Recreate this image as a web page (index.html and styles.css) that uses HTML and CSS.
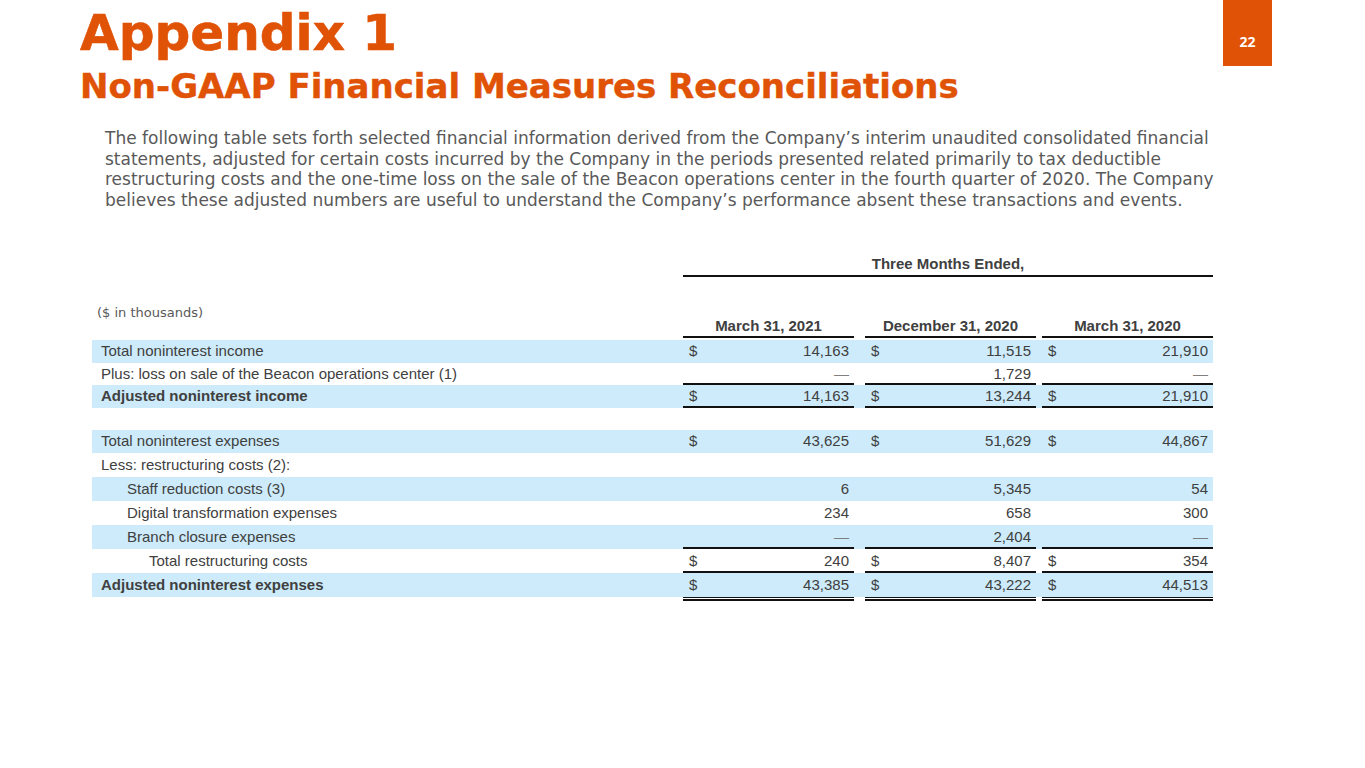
FILE: index.html
```html
<!DOCTYPE html>
<html lang="en">
<head>
<meta charset="utf-8">
<title>Appendix 1</title>
<link rel="stylesheet" href="styles.css">
</head>
<body>
<div class="page">
  <header class="header">
    <div class="titles">
      <h1 class="title">Appendix 1</h1>
      <h2 class="subtitle">Non-GAAP Financial Measures Reconciliations</h2>
    </div>
    <div class="badge">22</div>
  </header>
  <p class="intro">The following table sets forth selected financial information derived from the Company’s interim unaudited consolidated financial<br>statements, adjusted for certain costs incurred by the Company in the periods presented related primarily to tax deductible<br>restructuring costs and the one-time loss on the sale of the Beacon operations center in the fourth quarter of 2020. The Company<br>believes these adjusted numbers are useful to understand the Company’s performance absent these transactions and events.</p>

  <table class="fin">
    <colgroup>
      <col class="c-label">
      <col class="c-cur"><col class="c-num">
      <col class="c-gap1">
      <col class="c-cur"><col class="c-num">
      <col class="c-gap2">
      <col class="c-cur"><col class="c-num">
    </colgroup>
    <tbody>
      <tr class="r-period">
        <td></td>
        <td colspan="8" class="period">Three Months Ended,</td>
      </tr>
      <tr class="r-head">
        <td class="units">($ in thousands)</td>
        <td colspan="2" class="colhead">March 31, 2021</td>
        <td></td>
        <td colspan="2" class="colhead">December 31, 2020</td>
        <td></td>
        <td colspan="2" class="colhead">March 31, 2020</td>
      </tr>
      <tr class="r-space"><td colspan="9"></td></tr>

      <tr class="row blue">
        <td class="lbl">Total noninterest income</td>
        <td class="cur">$</td><td class="num">14,163</td><td></td>
        <td class="cur">$</td><td class="num">11,515</td><td></td>
        <td class="cur">$</td><td class="num">21,910</td>
      </tr>
      <tr class="row short ul">
        <td class="lbl">Plus: loss on sale of the Beacon operations center (1)</td>
        <td class="cur"></td><td class="num dash">—</td><td></td>
        <td class="cur"></td><td class="num">1,729</td><td></td>
        <td class="cur"></td><td class="num dash">—</td>
      </tr>
      <tr class="row blue ul">
        <td class="lbl strong">Adjusted noninterest income</td>
        <td class="cur">$</td><td class="num">14,163</td><td></td>
        <td class="cur">$</td><td class="num">13,244</td><td></td>
        <td class="cur">$</td><td class="num">21,910</td>
      </tr>
      <tr class="row short">
        <td class="lbl"></td>
        <td></td><td></td><td></td><td></td><td></td><td></td><td></td><td></td>
      </tr>
      <tr class="row blue">
        <td class="lbl">Total noninterest expenses</td>
        <td class="cur">$</td><td class="num">43,625</td><td></td>
        <td class="cur">$</td><td class="num">51,629</td><td></td>
        <td class="cur">$</td><td class="num">44,867</td>
      </tr>
      <tr class="row tall">
        <td class="lbl">Less: restructuring costs (2):</td>
        <td></td><td></td><td></td><td></td><td></td><td></td><td></td><td></td>
      </tr>
      <tr class="row tall blue">
        <td class="lbl ind1">Staff reduction costs (3)</td>
        <td class="cur"></td><td class="num">6</td><td></td>
        <td class="cur"></td><td class="num">5,345</td><td></td>
        <td class="cur"></td><td class="num">54</td>
      </tr>
      <tr class="row tall">
        <td class="lbl ind1">Digital transformation expenses</td>
        <td class="cur"></td><td class="num">234</td><td></td>
        <td class="cur"></td><td class="num">658</td><td></td>
        <td class="cur"></td><td class="num">300</td>
      </tr>
      <tr class="row tall blue ul">
        <td class="lbl ind1">Branch closure expenses</td>
        <td class="cur"></td><td class="num dash">—</td><td></td>
        <td class="cur"></td><td class="num">2,404</td><td></td>
        <td class="cur"></td><td class="num dash">—</td>
      </tr>
      <tr class="row tall ul">
        <td class="lbl ind2">Total restructuring costs</td>
        <td class="cur">$</td><td class="num">240</td><td></td>
        <td class="cur">$</td><td class="num">8,407</td><td></td>
        <td class="cur">$</td><td class="num">354</td>
      </tr>
      <tr class="row tall blue dbl">
        <td class="lbl strong">Adjusted noninterest expenses</td>
        <td class="cur">$</td><td class="num">43,385</td><td></td>
        <td class="cur">$</td><td class="num">43,222</td><td></td>
        <td class="cur">$</td><td class="num">44,513</td>
      </tr>
    </tbody>
  </table>
</div>
</body>
</html>
```

FILE: styles.css
```css
html, body {
  margin: 0;
  padding: 0;
  background: #ffffff;
}

.page {
  width: 1365px;
  height: 768px;
  overflow: hidden;
  background: #ffffff;
}

.header {
  display: flex;
  justify-content: space-between;
  align-items: flex-start;
  padding-left: 80px;
  padding-right: 93px;
}

.title {
  margin: 0;
  padding-top: 4px;
  font-family: "DejaVu Sans", Verdana, sans-serif;
  font-weight: bold;
  font-size: 50px;
  line-height: 58px;
  color: #e05206;
  -webkit-text-stroke: 0.6px #e05206;
}

.subtitle {
  margin: 4px 0 0 0;
  font-family: "DejaVu Sans", Verdana, sans-serif;
  font-weight: bold;
  font-size: 34px;
  line-height: 40px;
  color: #e05206;
  -webkit-text-stroke: 0.4px #e05206;
}

.badge {
  width: 49px;
  height: 66px;
  background: #e05206;
  color: #ffffff;
  font-family: "Open Sans", "Liberation Sans", sans-serif;
  font-weight: bold;
  font-size: 14px;
  display: flex;
  align-items: flex-end;
  justify-content: center;
  padding-bottom: 15px;
  box-sizing: border-box;
}

.intro {
  margin: 22px 0 0 105px;
  font-family: "DejaVu Sans", Verdana, sans-serif;
  font-size: 17px;
  line-height: 20.7px;
  color: #595959;
  white-space: nowrap;
}

.fin {
  margin: 42px 0 0 92px;
  width: 1121px;
  table-layout: fixed;
  border-collapse: separate;
  border-spacing: 0;
  font-family: "Liberation Sans", Arial, sans-serif;
  font-size: 15px;
  color: #404040;
}

.c-label { width: 591px; }
.c-cur { width: 30px; }
.c-num { width: 141px; }
.c-gap1 { width: 11px; }
.c-gap2 { width: 6px; }

.fin td {
  padding: 0;
  white-space: nowrap;
}

.period {
  text-align: center;
  font-weight: bold;
  line-height: 22px;
  border-bottom: 2px solid #111111;
}

.r-head td {
  vertical-align: bottom;
}

.units {
  vertical-align: top !important;
  padding: 27px 0 16px 5px !important;
  font-family: "DejaVu Sans", Verdana, sans-serif;
  font-size: 13px;
  line-height: 18px;
  color: #595959;
}

.colhead {
  text-align: center;
  font-weight: bold;
  line-height: 17px;
  padding-bottom: 2px !important;
  border-bottom: 2px solid #111111;
}

.r-space td {
  height: 2px;
  line-height: 2px;
}

.row td {
  height: 23px;
  line-height: 16px;
  vertical-align: middle;
}

.row.short td {
  height: 22px;
}

.row.tall td {
  height: 24px;
}

.row.blue td {
  background: #cdebfa;
}

.strong {
  font-weight: bold;
}

.lbl {
  padding-left: 9px !important;
}

.lbl.ind1 {
  padding-left: 35px !important;
}

.lbl.ind2 {
  padding-left: 57px !important;
}

.cur {
  padding-left: 6px !important;
  text-align: left;
}

.num {
  text-align: right;
  padding-right: 5px !important;
}

.dash {
  color: #7f7f7f;
}

.row.ul td.cur,
.row.ul td.num {
  box-shadow: inset 0 -2px 0 #111111;
}

.row.dbl td.cur,
.row.dbl td.num {
  box-shadow: 0 1px 0 #111111, 0 2px 0 #ffffff, 0 4px 0 #111111;
}
```
